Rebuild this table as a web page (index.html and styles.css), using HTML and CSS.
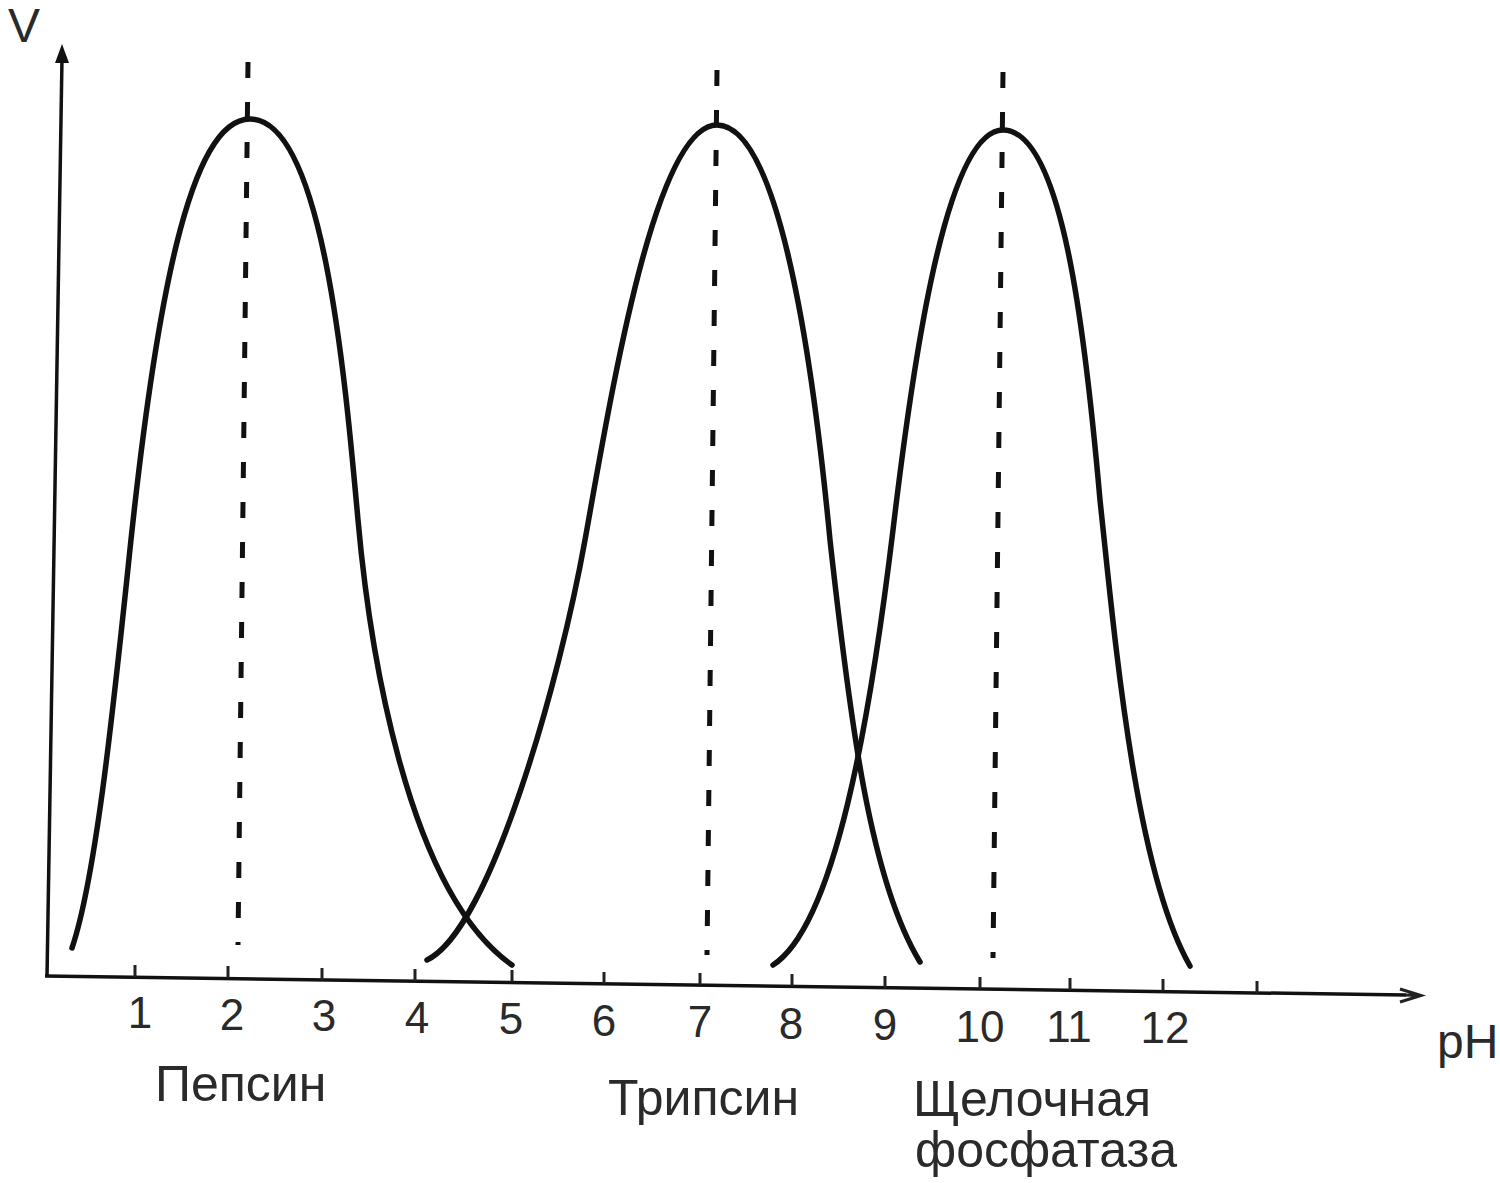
FILE: index.html
```html
<!DOCTYPE html>
<html lang="ru">
<head>
<meta charset="utf-8">
<title>Зависимость скорости реакции от pH</title>
<link rel="stylesheet" href="styles.css">
</head>
<body>
<main class="page">
  <svg class="chart" width="1500" height="1183" viewBox="0 0 1500 1183" xmlns="http://www.w3.org/2000/svg">
    <!-- axes -->
    <path class="axis" d="M47,977 L62,58"/>
    <polygon class="arrow" points="62,44 55,63 69,63"/>
    <path class="axis" d="M45,976 L1406,995"/>
    <path class="arrow-x" d="M1400,989 L1421,995.5 L1400,1002 M1405,995 L1421,995.5"/>

    <!-- ticks -->
    <g class="ticks">
      <path d="M135,965 L135,977"/>
      <path d="M228,966 L228,978"/>
      <path d="M322,968 L322,980"/>
      <path d="M415,969 L415,981"/>
      <path d="M512,970 L512,982"/>
      <path d="M604,972 L604,984"/>
      <path d="M700,973 L700,985"/>
      <path d="M792,974 L792,986"/>
      <path d="M885,976 L885,988"/>
      <path d="M980,977 L980,989"/>
      <path d="M1070,978 L1070,990"/>
      <path d="M1163,979 L1163,991"/>
      <path d="M1257,981 L1257,993"/>
    </g>

    <!-- dashed optimum lines -->
    <path class="dash" d="M248,62 L238,945"/>
    <path class="dash" d="M717,70 L707,955"/>
    <path class="dash" d="M1003,72 L993,958"/>

    <!-- curves -->
    <path class="curve" d="M72,948 C95,880 112,720 127,578 C155,300 190,119 250,119 C322,119 344.5,370 358,520 C368.8,640 405,890 512,965"/>
    <path class="curve" d="M427,960 C490,930 560,680 585,540 C612,390 655,125 717,125 C775,125 810,330 830,540 C850,720 870,880 920,962"/>
    <path class="curve" d="M773,965 C835,925 870,720 893,530 C912,370 945,130 1003,130 C1062,130 1085,330 1100,500 C1115,640 1135,870 1190,966"/>

    <!-- axis labels -->
    <text class="axis-label" x="8" y="42">V</text>
    <text class="axis-label" x="1437" y="1058">pH</text>

    <g class="nums">
      <text x="140" y="1028">1</text>
      <text x="232" y="1030">2</text>
      <text x="324" y="1031">3</text>
      <text x="417" y="1033">4</text>
      <text x="511" y="1034">5</text>
      <text x="604" y="1036">6</text>
      <text x="700" y="1037">7</text>
      <text x="791" y="1039">8</text>
      <text x="885" y="1040">9</text>
      <text x="980" y="1042">10</text>
      <text x="1069" y="1042">11</text>
      <text x="1165" y="1043">12</text>
    </g>

    <g class="names">
      <text x="155" y="1101">Пепсин</text>
      <text x="608" y="1115">Трипсин</text>
      <text x="913" y="1116">Щелочная</text>
      <text x="915" y="1167">фосфатаза</text>
    </g>
  </svg>
</main>
</body>
</html>
```
FILE: styles.css
```css
html, body {
  margin: 0;
  padding: 0;
  background: #ffffff;
}

.page {
  width: 1500px;
  height: 1183px;
  overflow: hidden;
}

.chart {
  display: block;
}

.axis {
  fill: none;
  stroke: #111111;
  stroke-width: 3.5;
}

.arrow {
  fill: #111111;
}

.arrow-x {
  fill: none;
  stroke: #222222;
  stroke-width: 3;
}

.ticks path {
  stroke: #222222;
  stroke-width: 3;
}

.dash {
  fill: none;
  stroke: #111111;
  stroke-width: 5;
  stroke-dasharray: 16 24;
}

.curve {
  fill: none;
  stroke: #111111;
  stroke-width: 5.5;
  stroke-linecap: round;
  stroke-linejoin: round;
}

.axis-label {
  font-family: "Liberation Sans", Arial, sans-serif;
  font-size: 48px;
  fill: #2a2a2a;
}

.nums text {
  font-family: "Liberation Sans", Arial, sans-serif;
  font-size: 44px;
  fill: #2a2a2a;
  text-anchor: middle;
}

.names text {
  font-family: "Liberation Sans", Arial, sans-serif;
  font-size: 50px;
  fill: #2a2a2a;
}
```
